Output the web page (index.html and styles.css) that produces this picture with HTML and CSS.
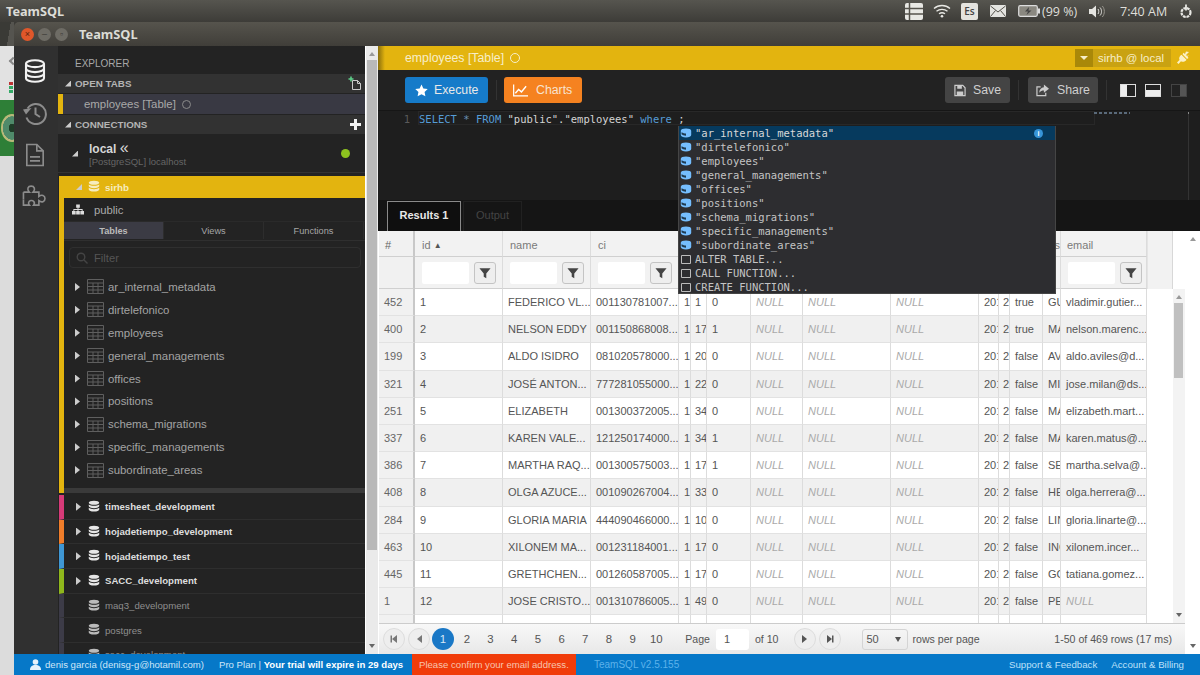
FILE: index.html
```html
<!DOCTYPE html>
<html lang="en">
<head>
<meta charset="utf-8">
<title>TeamSQL</title>
<link rel="stylesheet" href="styles.css">
</head>
<body>
<svg class="defs" aria-hidden="true">
  <symbol id="db" viewBox="0 0 16 18"><path fill="currentColor" d="M8 .5C4 .5 1 1.600 1 3.200S4 5.900 8 5.900s7-1.100 7-2.700S12 .5 8 .5ZM1 5.500v2.300c0 1.600 3 2.700 7 2.700s7-1.100 7-2.700V5.500c-1.400 1.200-4 1.800-7 1.800s-5.600-.6-7-1.800ZM1 10.100v2.300c0 1.600 3 2.700 7 2.700s7-1.100 7-2.700v-2.300c-1.400 1.200-4 1.800-7 1.800s-5.600-.6-7-1.800Z"/></symbol>
  <symbol id="tbl" viewBox="0 0 17 15"><path fill="none" stroke="currentColor" d="M.5.500h16v14H.500ZM.5 4h16M.5 7.500h16M.5 11h16M6 4v10.500M11 4v10.500"/></symbol>
  <symbol id="funnel" viewBox="0 0 14 14"><path fill="currentColor" d="M.5 1.500h13L8.500 7.500V13L5.500 11.500V7.500Z"/></symbol>
  <symbol id="ctable" viewBox="0 0 12 10"><path fill="#75beff" d="M6 .5C3 .5 .8 1.400.8 2.700v4.400C.8 8.500 3 9.500 6 9.500s5.200-1 5.200-2.400V2.700C11.200 1.400 9 .5 6 .5Z"/><path fill="#1e3a50" d="M1.500 4.300C3 5.300 4.500 5.500 6 5.500V7.800C4 7.800 2.500 7 1.500 6.300Z"/></symbol>
  <symbol id="csnip" viewBox="0 0 10 10"><path fill="none" stroke="#bbb" d="M.5 1.500h9v8h-9Z"/></symbol>
</svg>

<header class="panel">
  <span class="panel-title">TeamSQL</span>
  <div class="tray">
    <svg class="t-list" viewBox="0 0 18 17"><rect width="18" height="17" rx="2" fill="#e8e8e4"/><path stroke="#55534c" stroke-width="1.500" d="M0 5.500h18M0 11h18M4.500 0v17"/></svg>
    <svg class="t-wifi" viewBox="0 0 18 14"><g fill="none" stroke="#e8e8e4" stroke-width="1.300"><path d="M1 4.500C5.500.5 12.500.5 17 4.500"/><path d="M3.500 7.200C6.500 4.700 11.500 4.700 14.500 7.200"/><path d="M6 9.800C7.800 8.500 10.200 8.500 12 9.800"/></g><circle cx="9" cy="12.300" r="1.300" fill="#e8e8e4"/></svg>
    <span class="t-lang">Es</span>
    <svg class="t-mail" viewBox="0 0 16 12"><rect width="16" height="12" rx="1" fill="#e4e4e0"/><path fill="none" stroke="#55534c" d="M.5 1 8 7l7.500-6M.5 11.500 5.500 5.500M15.500 11.500l-5-6"/></svg>
    <svg class="t-batt" viewBox="0 0 22 12"><rect x=".7" y=".7" width="18.600" height="10.600" rx="1.500" fill="#8a8880" stroke="#ddd" stroke-width="1.200"/><rect x="20" y="3.500" width="2" height="5" fill="#ddd"/><path fill="#444" d="M11 2 7 6.500h3L8.500 10l5-4.500h-3Z"/></svg>
    <span class="t-text">(99 %)</span>
    <svg class="t-vol" viewBox="0 0 16 13"><path fill="#e4e4e0" d="M0 4h3l4-3.500v12L3 9H0Z"/><path fill="none" stroke="#e4e4e0" d="M9 4c1 1.500 1 3.500 0 5M11 2.500c2 2 2 6 0 8"/><path fill="none" stroke="#99978f" d="M13.300 1c2.700 3 2.700 8 0 11"/></svg>
    <span class="t-clock">7:40 AM</span>
    <svg class="t-power" viewBox="0 0 14 15"><circle cx="7" cy="8.500" r="4.500" fill="none" stroke="#e8e8e4" stroke-width="2.200" stroke-dasharray="2.800 .8"/><path stroke="#e8e8e4" stroke-width="1.800" d="M7 .5v6"/></svg>
  </div>
</header>

<div class="desktop">
  <aside class="wallpaper">
    <div class="wp-dark"></div>
    <div class="wp-light"><i class="wp-chev"></i><i class="wp-dots"></i></div>
    <div class="wp-green"><i class="wp-emblem"></i></div>
    <div class="wp-rest"></div>
  </aside>

  <div class="window">
    <div class="titlebar">
      <span class="wbtn wclose">×</span><span class="wbtn wmin">–</span><span class="wbtn wmax">▫</span>
      <span class="wtitle">TeamSQL</span>
    </div>

    <div class="app">
      <nav class="activity">
        <svg class="ai ai-db" viewBox="0 0 24 26"><g fill="none" stroke="currentColor" stroke-width="2.300"><ellipse cx="12" cy="5" rx="9.800" ry="3.800"/><path d="M2.200 5v16c0 2.100 4.400 3.800 9.800 3.800s9.800-1.700 9.800-3.800V5"/><path d="M2.200 10.400c0 2.100 4.400 3.800 9.800 3.800s9.800-1.700 9.800-3.800"/><path d="M2.200 15.800c0 2.100 4.400 3.800 9.800 3.800s9.800-1.700 9.800-3.800"/></g></svg>
        <svg class="ai ai-hist" viewBox="0 0 24 24"><g fill="none" stroke="currentColor" stroke-width="2"><path d="M4.600 7.500A10 10 0 1 1 3.500 16.500"/><path d="M12.500 6.500v6.500l4.500 3"/></g><path fill="currentColor" d="M0 8.500 8.500 7 3 13.500Z"/></svg>
        <svg class="ai ai-file" viewBox="0 0 22 26"><g fill="none" stroke="currentColor" stroke-width="1.800"><path d="M2 1.500h11l7 7v16H2Z"/><path d="M13 1.500v7h7"/><path d="M5.500 15h11M5.500 19.500h11"/></g></svg>
        <svg class="ai ai-puz" viewBox="0 0 28 26"><g fill="none" stroke="currentColor" stroke-width="1.700"><path d="M1.500 9h6c-1.500-1.500-1.800-2.800-1.300-4.200 1-2.700 5.600-2.700 6.600 0 .5 1.400.2 2.700-1.300 4.200h6v4.500c1.500-1.200 3-1.500 4.300-1 2.700 1 2.700 5.400 0 6.400-1.300.5-2.800.2-4.300-1v4.600h-5.500c1-1.300 1-2.800.2-3.800-1.500-1.700-4.700-1.300-5.300.9-.2 1-.1 2 .7 2.900H1.500v-6"/><path d="M1.500 16.500v-7.500"/></g></svg>
      </nav>

      <section class="sidebar">
        <div class="ex-title">EXPLORER</div>
        <div class="sec-head"><i class="tri-open"></i><span>OPEN TABS</span>
          <svg class="sec-new" viewBox="0 0 14 14"><path fill="none" stroke="#ccc" d="M4.500 4.500h5l3 3v6h-8Z"/><path fill="none" stroke="#ccc" d="M9.500 4.500v3h3"/><path stroke="#5fd08a" stroke-width="1.600" d="M3 .5v5M.5 3h5"/></svg>
        </div>
        <div class="open-tab"><span>employees [Table]</span><i class="ring"></i></div>
        <div class="sec-head"><i class="tri-open"></i><span>CONNECTIONS</span><span class="sec-plus"></span></div>
        <div class="conn">
          <i class="tri-open conn-tri"></i>
          <div class="conn-txt"><b>local <span class="conn-chev">«</span></b><small>[PostgreSQL] localhost</small></div>
          <i class="conn-dot"></i>
        </div>
        <div class="db-active"><i class="tri-open"></i><svg class="db-ic"><use href="#db"/></svg><span>sirhb</span></div>
        <div class="db-tree">
          <div class="schema">
            <svg class="schema-ic" viewBox="0 0 13 11"><path fill="#ddd" d="M4.500 0h4v3.500h-4ZM6 3.500h1V5h4.500v2h-1V6H7v1H6V6H2.500v1h-1V5H6ZM0 7h4v4H0ZM4.500 7h4v4h-4ZM9 7h4v4H9Z"/></svg>
            <span>public</span>
          </div>
          <div class="seg"><span class="seg-on">Tables</span><span>Views</span><span>Functions</span></div>
          <div class="filter">
            <svg class="filter-ic" viewBox="0 0 12 12"><g fill="none" stroke="#444" stroke-width="1.400"><circle cx="5" cy="5" r="3.800"/><path d="m8 8 3.500 3.500"/></g></svg>
            <span>Filter</span>
          </div>
          <ul class="tables">
            <li><i class="tri"></i><svg class="tbl-ic"><use href="#tbl"/></svg><span>ar_internal_metadata</span></li>
            <li><i class="tri"></i><svg class="tbl-ic"><use href="#tbl"/></svg><span>dirtelefonico</span></li>
            <li><i class="tri"></i><svg class="tbl-ic"><use href="#tbl"/></svg><span>employees</span></li>
            <li><i class="tri"></i><svg class="tbl-ic"><use href="#tbl"/></svg><span>general_managements</span></li>
            <li><i class="tri"></i><svg class="tbl-ic"><use href="#tbl"/></svg><span>offices</span></li>
            <li><i class="tri"></i><svg class="tbl-ic"><use href="#tbl"/></svg><span>positions</span></li>
            <li><i class="tri"></i><svg class="tbl-ic"><use href="#tbl"/></svg><span>schema_migrations</span></li>
            <li><i class="tri"></i><svg class="tbl-ic"><use href="#tbl"/></svg><span>specific_managements</span></li>
            <li><i class="tri"></i><svg class="tbl-ic"><use href="#tbl"/></svg><span>subordinate_areas</span></li>
          </ul>
          <div class="tree-sep"></div>
        </div>
        <div class="db-row s-pink"><i class="tri"></i><svg class="db-ic"><use href="#db"/></svg><b>timesheet_development</b></div>
        <div class="db-row s-orange"><i class="tri"></i><svg class="db-ic"><use href="#db"/></svg><b>hojadetiempo_development</b></div>
        <div class="db-row s-blue"><i class="tri"></i><svg class="db-ic"><use href="#db"/></svg><b>hojadetiempo_test</b></div>
        <div class="db-row s-green"><i class="tri"></i><svg class="db-ic"><use href="#db"/></svg><b>SACC_development</b></div>
        <div class="db-row s-dim"><i class="tri-none"></i><svg class="db-ic"><use href="#db"/></svg><span>maq3_development</span></div>
        <div class="db-row s-dim"><i class="tri-none"></i><svg class="db-ic"><use href="#db"/></svg><span>postgres</span></div>
        <div class="db-row s-dim"><i class="tri-none"></i><svg class="db-ic"><use href="#db"/></svg><span>sacc_development</span></div>
      </section>

      <div class="sb-scroll"><i class="arr-up"></i><i class="sb-thumb"></i><i class="arr-down"></i></div>

      <main class="main">
        <div class="tabbar">
          <span class="tab-name">employees [Table]</span><i class="ring ring-y"></i>
          <div class="conn-select"><span class="cs-caret"><i></i></span><span class="cs-name">sirhb @ local</span></div>
          <svg class="plug" viewBox="0 0 14 14"><path fill="#fbf0c4" d="M13 1 10 4l1 1 2-1-1.500 1.500 1 1.500-1.500 1L6.500 3.200l1-1.500L9 3l1-2.500ZM5.500 3.800l5 5c-1.500 2-3.500 2.500-5.500 1.500L2.500 13 1 11.500 3.500 9C2.500 7 3.500 5.200 5.500 3.800Z"/></svg>
        </div>

        <div class="toolbar">
          <button class="btn btn-blue"><svg class="btn-ic" viewBox="0 0 14 14"><path fill="#fff" d="m7 .5 2 4.300 4.700.6-3.400 3.200.9 4.700L7 11l-4.200 2.300.9-4.700L.3 5.400 5 4.800Z"/></svg>Execute</button>
          <i class="tb-div"></i>
          <button class="btn btn-orange"><svg class="btn-ic btn-chart" viewBox="0 0 16 13"><path fill="none" stroke="#fff" stroke-width="1.300" d="M.7 0v12.300H16"/><path fill="none" stroke="#fff" stroke-width="1.500" d="m2.500 9.500 3.500-4 3 2.500 5-6"/></svg>Charts</button>
          <button class="btn btn-grey btn-save"><svg class="btn-ic" viewBox="0 0 13 13"><path fill="none" stroke="#ccc" stroke-width="1.300" d="M1 1h8.500L12 3.500V12H1Z"/><path fill="#ccc" d="M3.500 1h5v3.500h-5ZM3 7.500h7V12H3Z"/></svg>Save</button>
          <i class="tb-div"></i>
          <button class="btn btn-grey btn-share"><svg class="btn-ic" viewBox="0 0 14 13"><path fill="none" stroke="#ccc" stroke-width="1.300" d="M5 2.500H1v9.500h9.500v-3"/><path fill="#ccc" d="M8.500 0 14 4.500 8.500 9V6.500c-2 0-3.700.5-5 2.500 0-3.500 2-5.800 5-6Z"/></svg>Share</button>
          <i class="tb-div"></i>
          <i class="lay lay-left"></i><i class="lay lay-bottom"></i><i class="lay lay-right"></i>
        </div>

        <div class="editor">
          <i class="cur-line"></i>
          <div class="code-line"><span class="ln">1</span><code><span class="kw">SELECT</span> <span class="st">*</span> <span class="kw">FROM</span> "public"."employees" <span class="kw">where</span> ;</code></div>
          <i class="ed-mini"></i>
          <i class="ed-slider"></i>
          <div class="suggest">
            <div class="sg sg-on"><svg class="sg-ic"><use href="#ctable"/></svg><span>"ar_internal_metadata"</span><i class="sg-info">i</i></div>
            <div class="sg"><svg class="sg-ic"><use href="#ctable"/></svg><span>"dirtelefonico"</span></div>
            <div class="sg"><svg class="sg-ic"><use href="#ctable"/></svg><span>"employees"</span></div>
            <div class="sg"><svg class="sg-ic"><use href="#ctable"/></svg><span>"general_managements"</span></div>
            <div class="sg"><svg class="sg-ic"><use href="#ctable"/></svg><span>"offices"</span></div>
            <div class="sg"><svg class="sg-ic"><use href="#ctable"/></svg><span>"positions"</span></div>
            <div class="sg"><svg class="sg-ic"><use href="#ctable"/></svg><span>"schema_migrations"</span></div>
            <div class="sg"><svg class="sg-ic"><use href="#ctable"/></svg><span>"specific_managements"</span></div>
            <div class="sg"><svg class="sg-ic"><use href="#ctable"/></svg><span>"subordinate_areas"</span></div>
            <div class="sg"><svg class="sg-ic sg-box"><use href="#csnip"/></svg><span>ALTER TABLE...</span></div>
            <div class="sg"><svg class="sg-ic sg-box"><use href="#csnip"/></svg><span>CALL FUNCTION...</span></div>
            <div class="sg"><svg class="sg-ic sg-box"><use href="#csnip"/></svg><span>CREATE FUNCTION...</span></div>
          </div>
        </div>

        <div class="res-tabs"><span class="res-tab res-on">Results 1</span><span class="res-tab">Output</span></div>

        <div class="results">
          <div class="grid">
            <div class="grid-top">
              <div class="sheet">
                <div class="row r-head"><span>#</span><span>id <i class="sort">▲</i></span><span>name</span><span>ci</span><span></span><span></span><span></span><span></span><span></span><span></span><span></span><span></span><span></span><span class="hd-clip">as</span><span>email</span></div>
                <div class="row r-filter">
                  <span></span>
                  <span class="fc"><i class="f-in"></i><i class="f-btn"><svg><use href="#funnel"/></svg></i></span>
                  <span class="fc"><i class="f-in"></i><i class="f-btn"><svg><use href="#funnel"/></svg></i></span>
                  <span class="fc"><i class="f-in"></i><i class="f-btn"><svg><use href="#funnel"/></svg></i></span>
                  <span></span><span></span><span></span><span></span><span></span><span></span><span></span><span></span><span></span><span></span>
                  <span class="fc"><i class="f-in"></i><i class="f-btn"><svg><use href="#funnel"/></svg></i></span>
                </div>
                <div class="rows">
                  <div class="row"><span>452</span><span>1</span><span>FEDERICO VL...</span><span>001130781007...</span><span>1</span><span>1</span><span>0</span><span class="nul">NULL</span><span class="nul">NULL</span><span class="nul">NULL</span><span>201</span><span>2</span><span>true</span><span>GU</span><span>vladimir.gutier...</span></div>
                  <div class="row"><span>400</span><span>2</span><span>NELSON EDDY</span><span>001150868008...</span><span>1</span><span>17</span><span>1</span><span class="nul">NULL</span><span class="nul">NULL</span><span class="nul">NULL</span><span>201</span><span>2</span><span>true</span><span>MA</span><span>nelson.marenc...</span></div>
                  <div class="row"><span>199</span><span>3</span><span>ALDO ISIDRO</span><span>081020578000...</span><span>1</span><span>20</span><span>0</span><span class="nul">NULL</span><span class="nul">NULL</span><span class="nul">NULL</span><span>201</span><span>2</span><span>false</span><span>AV</span><span>aldo.aviles@d...</span></div>
                  <div class="row"><span>321</span><span>4</span><span>JOSÉ ANTON...</span><span>777281055000...</span><span>1</span><span>22</span><span>0</span><span class="nul">NULL</span><span class="nul">NULL</span><span class="nul">NULL</span><span>201</span><span>2</span><span>false</span><span>MI</span><span>jose.milan@ds...</span></div>
                  <div class="row"><span>251</span><span>5</span><span>ELIZABETH</span><span>001300372005...</span><span>1</span><span>34</span><span>0</span><span class="nul">NULL</span><span class="nul">NULL</span><span class="nul">NULL</span><span>201</span><span>2</span><span>false</span><span>MA</span><span>elizabeth.mart...</span></div>
                  <div class="row"><span>337</span><span>6</span><span>KAREN VALE...</span><span>121250174000...</span><span>1</span><span>34</span><span>1</span><span class="nul">NULL</span><span class="nul">NULL</span><span class="nul">NULL</span><span>201</span><span>2</span><span>false</span><span>MA</span><span>karen.matus@...</span></div>
                  <div class="row"><span>386</span><span>7</span><span>MARTHA RAQ...</span><span>001300575003...</span><span>1</span><span>17</span><span>1</span><span class="nul">NULL</span><span class="nul">NULL</span><span class="nul">NULL</span><span>201</span><span>2</span><span>false</span><span>SE</span><span>martha.selva@...</span></div>
                  <div class="row"><span>408</span><span>8</span><span>OLGA AZUCE...</span><span>001090267004...</span><span>1</span><span>33</span><span>0</span><span class="nul">NULL</span><span class="nul">NULL</span><span class="nul">NULL</span><span>201</span><span>2</span><span>false</span><span>HE</span><span>olga.herrera@...</span></div>
                  <div class="row"><span>284</span><span>9</span><span>GLORIA MARIA</span><span>444090466000...</span><span>1</span><span>10</span><span>0</span><span class="nul">NULL</span><span class="nul">NULL</span><span class="nul">NULL</span><span>201</span><span>2</span><span>false</span><span>LIN</span><span>gloria.linarte@...</span></div>
                  <div class="row"><span>463</span><span>10</span><span>XILONEM MA...</span><span>001231184001...</span><span>1</span><span>17</span><span>0</span><span class="nul">NULL</span><span class="nul">NULL</span><span class="nul">NULL</span><span>201</span><span>2</span><span>false</span><span>INC</span><span>xilonem.incer...</span></div>
                  <div class="row"><span>445</span><span>11</span><span>GRETHCHEN...</span><span>001260587005...</span><span>1</span><span>17</span><span>0</span><span class="nul">NULL</span><span class="nul">NULL</span><span class="nul">NULL</span><span>201</span><span>2</span><span>false</span><span>GC</span><span>tatiana.gomez...</span></div>
                  <div class="row"><span>1</span><span>12</span><span>JOSE CRISTO...</span><span>001310786005...</span><span>1</span><span>49</span><span>0</span><span class="nul">NULL</span><span class="nul">NULL</span><span class="nul">NULL</span><span>201</span><span>2</span><span>false</span><span>PE</span><span class="nul">NULL</span></div>
                  <div class="row"><span></span><span></span><span></span><span></span><span></span><span></span><span></span><span></span><span></span><span></span><span></span><span></span><span></span><span></span><span></span></div>
                </div>
              </div>
              <div class="side">
                <div class="side-head"></div>
                <div class="side-scroll"><i class="arr-up"></i><i class="side-thumb"></i><i class="arr-down"></i></div>
              </div>
            </div>
            <div class="pager">
              <i class="pg-btn"><b class="g-first"></b></i>
              <i class="pg-btn"><b class="g-prev"></b></i>
              <span class="pg-num pg-on">1</span><span class="pg-num">2</span><span class="pg-num">3</span><span class="pg-num">4</span><span class="pg-num">5</span><span class="pg-num">6</span><span class="pg-num">7</span><span class="pg-num">8</span><span class="pg-num">9</span><span class="pg-num">10</span>
              <span class="pg-label">Page</span><span class="pg-input">1</span><span class="pg-of">of 10</span>
              <i class="pg-btn pg-next"><b class="g-next"></b></i>
              <i class="pg-btn"><b class="g-last"></b></i>
              <span class="pg-select">50<b class="g-down"></b></span>
              <span class="pg-rpp">rows per page</span>
              <span class="pg-count">1-50 of 469 rows (17 ms)</span>
            </div>
          </div>
          <div class="outer-scroll"><i class="arr-up"></i><i class="arr-down"></i></div>
        </div>
      </main>
    </div>

    <footer class="status">
      <svg class="st-user" viewBox="0 0 11 11"><circle cx="5.500" cy="3" r="2.800" fill="#e6f2fb"/><path fill="#e6f2fb" d="M0 11c0-3.500 2-5 5.500-5S11 7.500 11 11Z"/></svg>
      <span class="st-mail">denis garcia (denisg-g@hotamil.com)</span>
      <span class="st-plan">Pro Plan | <b>Your trial will expire in 29 days</b></span>
      <span class="st-warn">Please confirm your email address.</span>
      <span class="st-ver">TeamSQL v2.5.155</span>
      <span class="st-link st-support">Support &amp; Feedback</span>
      <span class="st-link">Account &amp; Billing</span>
    </footer>
  </div>
</div>
</body>
</html>
```
FILE: styles.css
```css
* { box-sizing: border-box; }
html, body { margin: 0; height: 100%; }
body {
  width: 1200px; height: 675px; overflow: hidden;
  display: flex; flex-direction: column;
  font-family: "Liberation Sans", Arial, sans-serif;
  font-size: 11px; background: #3c3b37;
}
i, b { font-style: normal; }
.defs { display: none; }

/* system panel */
.panel {
  height: 22px; flex: none; display: flex; align-items: center; padding: 0 7px 0 6px;
  background: linear-gradient(#56554f, #3d3c38);
}
.panel-title { font: bold 12.700px "Noto Sans", sans-serif; color: #dcdcd6; }
.tray { margin-left: auto; display: flex; align-items: center; color: #dfdfda; font: 12.500px "Open Sans", sans-serif; }
.t-list { width: 18px; height: 17px; margin-right: 10px; }
.t-wifi { width: 18px; height: 14px; margin-right: 10px; }
.t-lang { width: 17px; height: 17px; margin-right: 12px; background: #e4e3de; color: #444; border-radius: 2px; font-size: 10px; text-align: center; line-height: 17px; font-weight: 600; }
.t-mail { width: 16px; height: 12px; margin-right: 12px; }
.t-batt { width: 22px; height: 12px; margin-right: 2px; }
.t-text { width: 36px; white-space: nowrap; margin-right: 11px; }
.t-vol { width: 16px; height: 13px; margin-right: 15px; }
.t-clock { width: 47px; white-space: nowrap; margin-right: 12px; }
.t-power { width: 14px; height: 15px; }

/* desktop */
.desktop { flex: 1; min-height: 0; display: flex; }
.wallpaper { width: 14px; flex: none; display: flex; flex-direction: column; box-shadow: inset -3px 0 3px rgba(0,0,0,.25); }
.wp-dark { height: 24px; background: linear-gradient(100deg, #3a3a36 60%, #55544f 60%); }
.wp-light { height: 54px; background: #e2e2e2; position: relative; }
.wp-chev { position: absolute; left: 10px; top: 12px; width: 6px; height: 6px; border-left: 2px solid #888; border-bottom: 2px solid #888; transform: rotate(45deg); }
.wp-dots { position: absolute; left: 9px; top: 36px; width: 4px; height: 11px; background: linear-gradient(#b33 0 30%, transparent 30% 40%, #3a6 40% 65%, transparent 65% 75%, #3a6 75%); }
.wp-green { height: 56px; background: #2e7f37; position: relative; overflow: hidden; }
.wp-emblem { position: absolute; left: 1px; top: 14px; width: 22px; height: 28px; border-radius: 50%; background: radial-gradient(#1f3d28 0 20%, #4f8a6a 22% 58%, #b9b97a 60% 78%, #2e7f37 80%); }
.wp-rest { flex: 1; background: #dcdcdc; }

/* window */
.window { flex: 1; min-width: 0; display: flex; flex-direction: column; }
.titlebar {
  height: 24px; flex: none; display: flex; align-items: center; padding-left: 7px;
  background: linear-gradient(#56544d, #403e39); border-radius: 5px 0 0 0;
}
.wbtn { width: 13px; height: 13px; border-radius: 50%; margin-right: 4px; background: #6e6c65; color: #3c3b37; font-size: 9px; line-height: 13px; text-align: center; }
.wclose { background: #e0572a; color: #5c2410; }
.wtitle { margin-left: 7px; font: bold 12.800px "Noto Sans", sans-serif; color: #dcdcd6; }
.app { flex: 1; min-height: 0; display: flex; }

/* activity bar */
.activity { width: 44px; flex: none; background: #303030; display: flex; flex-direction: column; align-items: center; padding: 13px 2px 0 0; color: #8c8c8c; }
.ai { display: block; }
.ai-db { width: 22px; height: 24px; color: #f2f2f2; }
.ai-hist { width: 24px; height: 24px; margin-top: 18px; }
.ai-file { width: 20px; height: 24px; margin-top: 18px; }
.ai-puz { width: 27px; height: 26px; margin-top: 16px; }

/* sidebar */
.sidebar { width: 307px; flex: none; background: #232323; overflow: hidden; color: #aaa; }
.ex-title { height: 28px; padding: 12px 0 0 17px; line-height: 12px; font-size: 10px; color: #a8a8a8; }
.sec-head { height: 19px; margin-bottom: 1px; display: flex; align-items: center; padding-left: 7px; background: #323232; color: #b4b4b4; font-size: 9.800px; font-weight: bold; position: relative; }
.sec-head span:first-of-type { margin-left: 4px; }
.sec-new { position: absolute; right: 3px; top: 2px; width: 14px; height: 14px; }
.sec-plus { position: absolute; right: 4px; top: 4px; width: 11px; height: 11px; background: linear-gradient(#f2f2f2,#f2f2f2) center/3px 100% no-repeat, linear-gradient(#f2f2f2,#f2f2f2) center/100% 3px no-repeat; }
.tri-open { display: block; flex: none; width: 6px; height: 6px; background: #ccc; clip-path: polygon(100% 0, 100% 100%, 0 100%); }
.tri { display: block; flex: none; width: 5px; height: 8px; background: #ccc; clip-path: polygon(0 0, 100% 50%, 0 100%); }
.tri-none { display: block; flex: none; width: 5px; }
.open-tab { height: 20px; margin-bottom: 1px; display: flex; align-items: center; gap: 6px; padding-left: 21px; background: #393943; border-left: 5px solid #e3b40f; font-size: 11.400px; color: #a9a9a9; }
.ring { display: block; flex: none; width: 9px; height: 9px; border: 1.300px solid #8a8a8a; border-radius: 50%; }
.conn { height: 38px; display: flex; align-items: center; padding: 0 15px 0 14px; border-bottom: 1px solid #333; margin-bottom: 3px; }
.conn-txt { margin-left: 11px; flex: 1; display: flex; flex-direction: column; padding-top: 1px; }
.conn-txt b { font-size: 12px; color: #d6d6d6; line-height: 13px; }
.conn-chev { font-weight: normal; font-size: 16px; line-height: 12px; }
.conn-txt small { font-size: 9.500px; color: #666; line-height: 11px; }
.conn-dot { width: 9px; height: 9px; border-radius: 50%; background: #8dc21f; }
.db-active { height: 22px; margin-left: 1px; display: flex; align-items: center; background: #e3b40f; padding-left: 17px; color: #f6ecbe; font-weight: bold; font-size: 9.800px; }
.db-ic { width: 12px; height: 14px; flex: none; margin: 0 5px 0 6px; color: #e6e6e6; }
.db-active .db-ic { color: #f6ecbe; margin-left: 6px; }
.db-tree { margin: 0 0 2px 1px; border-left: 5px solid #e3b40f; }
.schema { height: 23px; display: flex; align-items: center; padding-left: 8px; color: #aaa; font-size: 11.300px; }
.schema-ic { width: 12px; height: 11px; margin-right: 10px; }
.seg { height: 20px; display: flex; border-bottom: 1px solid #2f2f2f; border-top: 1px solid #2a2a2a; font-size: 9.200px; color: #a6a6a6; padding-bottom: 1px; }
.seg span { width: 100px; display: flex; align-items: center; justify-content: center; border-right: 1px solid #2d2d2d; }
.seg .seg-on { background: #3b3b44; color: #bbb; font-weight: bold; }
.filter { height: 21px; margin: 6px 4px 0 5px; display: flex; align-items: center; gap: 6px; padding-left: 6px; border: 1px solid #2f2f2f; border-radius: 4px; color: #555; font-size: 11.200px; }
.filter-ic { width: 12px; height: 12px; }
.tables { list-style: none; margin: 7.500px 0 6.500px; padding: 0; }
.tables li { height: 22.900px; display: flex; align-items: center; padding-left: 11px; font-size: 11.400px; color: #a4a4a4; }
.tbl-ic { width: 17px; height: 15px; margin: 0 4px 0 7px; color: #5f5f5f; flex: none; }
.tree-sep { height: 5px; background: #3a3a3a; }
.db-row { height: 24.700px; margin-left: 1px; display: flex; align-items: center; padding-left: 12px; border-left: 5px solid; border-bottom: 1px solid #2e2e2e; font-size: 9.650px; color: #8e8e8e; }
.db-row b { color: #dedede; }
.db-row .db-ic { margin: 0 5px 0 7px; }
.s-pink { border-left-color: #d63a78; }
.s-orange { border-left-color: #f07d2a; }
.s-blue { border-left-color: #3f97d4; }
.s-green { border-left-color: #8fb71c; }
.s-dim { border-left-color: #3c3b47; }
.s-dim .db-ic { color: #bbb; }

/* sidebar scrollbar */
.sb-scroll { width: 13px; flex: none; background: #eaeaea; border-left: 1px solid #fff; position: relative; }
.sb-thumb { position: absolute; left: 1px; right: 1px; top: 14px; height: 490px; background: #b9b9b9; }
.arr-up, .arr-down { position: absolute; left: 50%; margin-left: -3px; width: 0; height: 0; border: 3px solid transparent; }
.arr-up { top: 6px; border-bottom: 4px solid #999; border-top: 0; }
.arr-down { bottom: 6px; border-top: 4px solid #666; border-bottom: 0; }

/* main */
.main { flex: 1; min-width: 0; display: flex; flex-direction: column; background: #1e1e1e; }
.tabbar { height: 24px; flex: none; display: flex; align-items: center; padding-left: 27px; background: linear-gradient(90deg, #8a6f0c, #e3b40f 7px); color: #f7eec8; font-size: 12.300px; }
.ring-y { margin-left: 6px; width: 10px; height: 10px; border-color: #f7eec8; }
.conn-select { margin-left: auto; height: 18px; width: 96px; display: flex; align-items: center; background: #c9a212; }
.cs-caret { width: 18px; height: 18px; flex: none; background: #a98809; display: flex; align-items: center; justify-content: center; }
.cs-caret i { width: 0; height: 0; border: 4px solid transparent; border-top: 4px solid #f7eec8; border-bottom: 0; }
.cs-name { margin-left: 5px; font-size: 11.400px; white-space: nowrap; }
.plug { width: 14px; height: 14px; margin: 0 10px 0 5px; flex: none; }

.toolbar { height: 40px; flex: none; display: flex; align-items: center; padding-left: 27px; background: #222; }
.btn { height: 26px; display: flex; align-items: center; border: 0; border-radius: 3px; padding: 0 10px; font: 12.300px "Liberation Sans", sans-serif; color: #e8e8e8; }
.btn-ic { width: 13px; height: 13px; margin-right: 6px; flex: none; }
.btn-chart { width: 15px; margin-right: 8px; }
.btn-blue { width: 83px; background: #167bc9; }
.btn-orange { width: 78px; margin-left: -1px; padding-left: 9px; background: #f58220; color: #f7e3cf; }
.btn-grey { background: #444; color: #cfcfcf; }
.btn-save { width: 65px; margin-left: 363px; padding: 0 9px; }
.btn-save .btn-ic { margin-right: 7px; width: 12px; }
.btn-share { width: 70px; margin-left: 1px; padding: 0 8px; }
.btn-share .btn-ic { margin-right: 8px; }
.tb-div { width: 1px; height: 20px; background: #333; margin: 0 8px; flex: none; }
.lay { width: 16px; height: 13px; border: 1.500px solid #ddd; flex: none; margin: 0 5px 0 4px; }
.tb-div + .lay { margin-left: 5px; }
.lay-left { background: linear-gradient(90deg, #eee 40%, transparent 40%); }
.lay-bottom { background: linear-gradient(transparent 45%, #eee 45%); }
.lay-right { border-color: #444; background: linear-gradient(90deg, transparent 60%, #555 60%); margin-left: 5px; }

.editor { height: 90px; flex: none; background: #1e1e1e; border-top: 1px solid #161616; position: relative; }
.cur-line { position: absolute; left: 40px; top: 0; width: 677px; height: 14px; border: 1px solid #282828; }
.code-line { height: 15px; display: flex; align-items: center; font: 10.500px "DejaVu Sans Mono", monospace; color: #d4d4d4; position: relative; }
.ln { width: 41px; text-align: right; padding-right: 9px; color: #5a5a5a; flex: none; }
.code-line code { font: inherit; white-space: pre; }
.kw { color: #569cd6; }
.st { color: #6a8fb5; }
.ed-mini { position: absolute; left: 716px; top: 1px; width: 36px; height: 2px; background: repeating-linear-gradient(90deg, #5a6a7a 0 3px, transparent 3px 5px); }
.ed-slider { position: absolute; right: 11px; top: 1px; width: 1px; height: 88px; background: #333; border-top: 2px solid #888; }
.suggest { position: absolute; left: 300px; top: 15px; width: 378px; height: 168px; background: #2d2d30; border: 1px solid #454545; border-top: 0; z-index: 5; overflow: hidden; font: 10.500px "DejaVu Sans Mono", monospace; color: #c4c4c4; }
.sg { height: 14px; display: flex; align-items: center; padding-left: 1px; white-space: pre; }
.sg-on { background: #063a5e; color: #d8d8d8; }
.sg-ic { width: 12px; height: 10px; margin-right: 3px; flex: none; }
.sg-info { margin-left: auto; margin-right: 12px; width: 9px; height: 9px; border-radius: 50%; background: #3794d8; color: #fff; font: bold 7px/9px "Liberation Sans", sans-serif; text-align: center; }

.res-tabs { height: 31px; flex: none; display: flex; align-items: flex-end; padding-left: 9px; gap: 2px; background: #151515; }
.res-tab { width: 59px; height: 30px; padding-bottom: 3px; display: flex; align-items: center; justify-content: center; border: 1px solid #212121; border-bottom: 0; color: #444; font-size: 11px; }
.res-on { width: 74px; border-color: #8a8a8a; background: #0f0f0f; color: #e8e8e8; font-weight: bold; }

/* results */
.results { flex: 1; min-height: 0; display: flex; padding-left: 1px; background: #fff; }
.grid { width: 806px; flex: none; display: flex; flex-direction: column; }
.grid-top { flex: 1; min-height: 0; display: flex; overflow: hidden; border-bottom: 1px solid #ccc; }
.sheet { width: 768px; flex: none; }
.row {
  display: grid;
  grid-template-columns: 36px 88px 88px 88px 12px 16px 44px 52px 88px 88px 20px 11px 33px 18px 86px;
  height: 27.200px; color: #555; font-size: 11px; line-height: 26px;
}
.row > span { display: block; overflow: hidden; white-space: nowrap; padding-left: 5px; border-right: 1px solid #dcdcdc; border-bottom: 1px solid #e2e2e2; }
.row > span:first-child { background: #f1f1f1; border-right: 2px solid #c8c8c8; color: #666; }
.rows .row:nth-child(even) > span { background: #f0f0f0; }
.rows .row > span:nth-child(6), .rows .row > span:nth-child(12) { padding-left: 4px; }
.nul { color: #aaa; font-style: italic; }
.r-head { height: 26px; line-height: 28px; font-size: 11px; }
.r-head > span { background: #f2f2f2; color: #7a7a7a; border-bottom: 1px solid #d0d0d0; padding-left: 7px; }
.r-head > span:last-child { padding-left: 6px; }
.r-head > span:first-child { padding-left: 6px; }
.sort { font-size: 8px; color: #555; vertical-align: 1px; }
.hd-clip { direction: rtl; padding-left: 0 !important; }
.r-filter { height: 32px; }
.r-filter > span { background: #f2f2f2; border-bottom: 1px solid #d0d0d0; }
.fc { display: flex !important; align-items: center; gap: 5px; padding: 0 6px 0 7px !important; }
.f-in { width: 47px; height: 22px; background: #fff; border-radius: 2px; flex: none; }
.f-btn { width: 22px; height: 22px; flex: none; background: #eee; border: 1px solid #c4c4c4; border-radius: 3px; display: flex; align-items: center; justify-content: center; }
.f-btn svg { width: 12px; height: 12px; color: #444; }
.side { width: 38px; flex: none; display: flex; flex-direction: column; }
.side-head { height: 58px; flex: none; width: 26px; background: #f2f2f2; border-right: 1px solid #d8d8d8; border-left: 1px solid #e4e4e4; }
.side-scroll { flex: 1; margin-left: 26px; position: relative; background: #f3f3f3; }
.side-thumb { position: absolute; left: 1px; right: 2px; top: 14px; height: 75px; background: #c0c0c0; }
.outer-scroll { flex: 1; position: relative; background: #fff; }

.pager { height: 30px; flex: none; display: flex; align-items: center; padding-left: 4px; background: linear-gradient(#f8f8f8, #e8e8e8); color: #555; font-size: 11px; }
.pg-btn { width: 22px; height: 22px; flex: none; margin-right: 3px; border-radius: 50%; border: 1px solid #ddd; background: #eee; display: flex; align-items: center; justify-content: center; color: #666; }
.pg-btn + .pg-btn { margin-right: 2px; }
.pg-next { margin-left: 15px; }
.pg-btn b { display: block; width: 0; height: 0; border: 4px solid transparent; }
.g-first, .g-prev { border-right: 5px solid #777 !important; border-left: 0 !important; }
.g-next, .g-last { border-left: 5px solid #555 !important; border-right: 0 !important; }
.g-first { box-shadow: -2px 0 0 -.5px #777; }
.g-last { box-shadow: 2px 0 0 -.5px #555; }
.pg-num { width: 23.700px; text-align: center; flex: none; font-size: 11.400px; position: relative; left: 1px; }
.pg-on { width: 22px; height: 22px; line-height: 22px; left: 0; border-radius: 50%; background: #1a78c6; color: #d7e8f6; }
.pg-label { margin-left: 18px; font-size: 10.600px; }
.pg-input { width: 33px; height: 21px; margin-left: 6px; padding-left: 8px; line-height: 21px; background: #fff; border-radius: 3px; flex: none; }
.pg-of { margin-left: 6px; white-space: nowrap; font-size: 10.600px; }
.pg-select { width: 46px; height: 21px; margin-left: 19px; padding-left: 4px; line-height: 18px; flex: none; border: 1px solid #d4d4d4; border-radius: 3px; display: flex; justify-content: space-between; padding-right: 6px; align-items: center; }
.g-down { width: 0; height: 0; border: 3.500px solid transparent; border-top: 5px solid #555; border-bottom: 0; }
.pg-rpp { margin-left: 5px; white-space: nowrap; font-size: 10.600px; }
.pg-count { margin-left: auto; margin-right: 13px; white-space: nowrap; font-size: 10.600px; }

/* status */
.status { height: 21px; flex: none; display: flex; align-items: center; background: #0678c8; color: #cfe6f7; font-size: 9.600px; white-space: nowrap; }
.st-user { width: 11px; height: 11px; margin-left: 16px; flex: none; }
.st-mail { margin-left: 4px; width: 160px; flex: none; }
.st-plan { margin-left: 14px; width: 186px; flex: none; }
.st-plan b { color: #fff; font-size: 9.600px; }
.st-warn { margin-left: 7px; height: 21px; width: 164px; flex: none; line-height: 21px; padding-left: 7px; background: #f03c0a; color: #f7c4ae; font-size: 9.600px; }
.st-ver { margin-left: 18px; color: #5db2ea; font-size: 10px; }
.st-support { margin-left: auto; }
.st-link { color: #bfe0f8; margin-right: 14px; font-size: 9.700px; }
.st-link:last-child { margin-right: 16px; }
```
